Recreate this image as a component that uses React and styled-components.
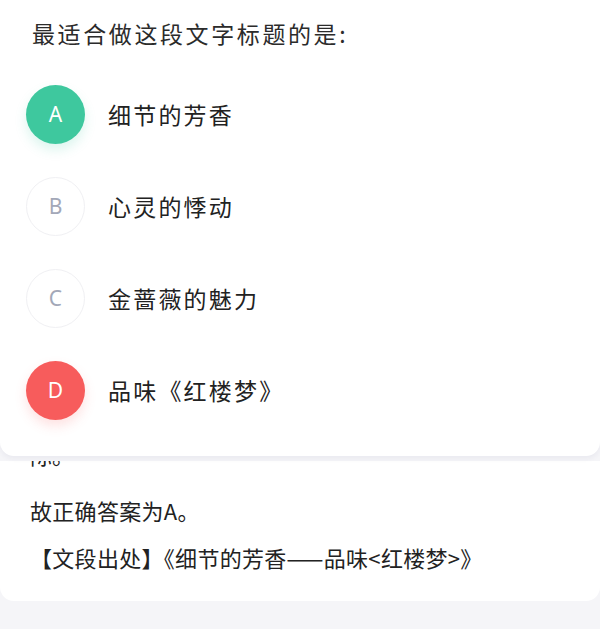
import styled, { createGlobalStyle } from 'styled-components';

const GlobalStyle = createGlobalStyle`
    * { box-sizing: border-box; margin: 0; padding: 0; }
    body {
        background: #f5f5f8;
        font-family: "Noto Sans CJK SC", "Noto Sans", sans-serif;
        color: #262626;
    }
`

const options = [
    { letter: 'A', text: '细节的芳香', state: 'right' },
    { letter: 'B', text: '心灵的悸动' },
    { letter: 'C', text: '金蔷薇的魅力' },
    { letter: 'D', text: '品味《红楼梦》', state: 'wrong' },
];

function Option({ letter, text, state }) {
    return (
        <Row>
            <Badge state={state}>{letter}</Badge>
            <OptionText>{text}</OptionText>
        </Row>
    )
}

export default function App() {
    return (
        <>
            <GlobalStyle />
            <Page>
                <QuestionCard>
                    <Title>最适合做这段文字标题的是:</Title>
                    <Options>
                        {options.map(o => <Option key={o.letter} {...o} />)}
                    </Options>
                </QuestionCard>
                <AnalysisCard>
                    <Clipped>际。</Clipped>
                    <Para first>故正确答案为A。</Para>
                    <Para>【文段出处】《细节的芳香——品味&lt;红楼梦&gt;》</Para>
                </AnalysisCard>
            </Page>
        </>
    )
}

const Page = styled.div`
    width: 600px;
    height: 629px;
    overflow: hidden;
    display: flex;
    flex-direction: column;
`

const QuestionCard = styled.div`
    position: relative;
    z-index: 1;
    background: #fff;
    padding: 16px 26px 20px;
    border-radius: 0 0 14px 14px;
    box-shadow: 0 3px 5px rgba(40, 40, 90, 0.05);
`

const Title = styled.h1`
    font-size: 23px;
    font-weight: 400;
    line-height: 34px;
    letter-spacing: 2.6px;
    color: #2b2b2b;
    margin-left: 6px;
    margin-bottom: 18px;
`

const Options = styled.div`
    display: flex;
    flex-direction: column;
`

const Row = styled.div`
    height: 92px;
    display: flex;
    align-items: center;
    gap: 23px;
`

const colors = {
    right: '#3ec89e',
    wrong: '#f75c5c',
};

const Badge = styled.div`
    width: 59px;
    height: 59px;
    border-radius: 50%;
    display: flex;
    align-items: center;
    justify-content: center;
    font-family: "Noto Sans", sans-serif;
    font-size: 21px;
    font-weight: 400;
    color: ${p => p.state ? '#fff' : '#a3a8b8'};
    background: ${p => p.state ? colors[p.state] : '#fff'};
    border: ${p => p.state ? 'none' : '1.5px solid #f0f0f3'};
    box-shadow: ${p => p.state === 'right'
        ? '0 6px 12px rgba(62, 200, 158, 0.18)'
        : p.state === 'wrong'
        ? '0 6px 12px rgba(247, 92, 92, 0.18)'
        : 'none'};
`

const OptionText = styled.span`
    font-size: 23px;
    letter-spacing: 2.2px;
    color: #222;
`

const AnalysisCard = styled.div`
    margin-top: 5px;
    height: 140px;
    overflow: hidden;
    background: #fff;
    border-radius: 0 0 14px 14px;
    padding: 0 30px;
    flex-shrink: 0;
`

const Clipped = styled.p`
    font-size: 22px;
    line-height: 30px;
    margin-top: -22px;
    color: #222;
`

const Para = styled.p`
    font-size: 22px;
    line-height: 30px;
    margin-top: ${p => p.first ? '26px' : '17px'};
    letter-spacing: 0.3px;
    color: #222;
    white-space: nowrap;
`
